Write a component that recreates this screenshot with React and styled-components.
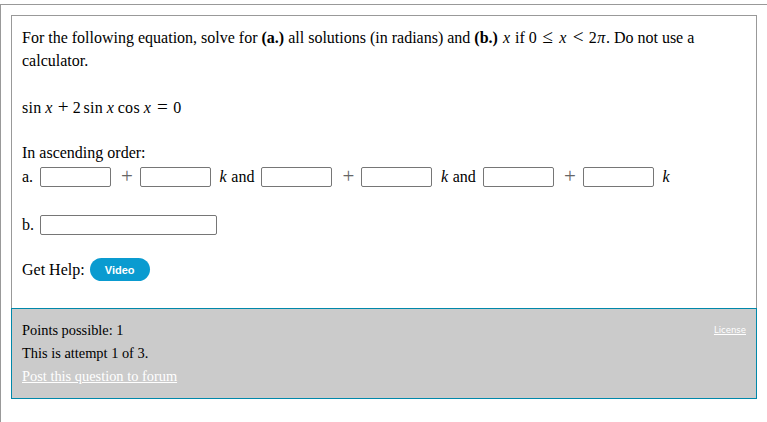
import React from "react";
import styled, { createGlobalStyle } from "styled-components";

const GlobalStyle = createGlobalStyle`
  html, body {
    margin: 0;
    padding: 0;
    background: #fff;
  }
  body {
    font-family: "Liberation Serif", "Times New Roman", serif;
    color: #000;
    overflow: hidden;
  }
`;

// Outer page frame: only top and left borders are visible in the window
const Frame = styled.div`
  margin-top: 4px;
  border-top: 1px solid #999;
  border-left: 1px solid #999;
  padding: 10px 10px 0 10px;
  height: 420px;
  box-sizing: border-box;
`;

const QuestionBox = styled.div`
  background: #fff;
  border: 1px solid #999;
  border-bottom: none;
  padding: 10px 10px 27px 10px;
  font-size: 16px;
  line-height: 23px;
`;

const Prompt = styled.p`
  margin: 0;
`;

const Equation = styled.div`
  margin-top: 24px;
`;

const Label = styled.div`
  margin-top: 22px;
`;

const AnswerRow = styled.div`
  display: flex;
  align-items: center;
  height: 23px;
  margin-top: ${(p) => p.$top || 0}px;
`;

const RowLabel = styled.span`
  width: 18px;
  flex: none;
`;

const Box = styled.input`
  box-sizing: border-box;
  width: ${(p) => p.$width || 71}px;
  height: 20px;
  margin: 0;
  padding: 0 3px;
  border: 1px solid #767676;
  border-radius: 2px;
  background: #fff;
  font: inherit;
  flex: none;
`;

const Plus = styled.span`
  margin: 0 7px 0 10px;
  color: #666;
  font-size: 21px;
  font-weight: 300;
  width: 12px;
  line-height: 1;
  text-align: center;
`;

const KAnd = styled.span`
  margin: 0 7px 0 8px;
  white-space: nowrap;
`;

const KLast = styled.span`
  margin-left: 8px;
`;

// Math glyphs get TeX-like advance widths so the formulas space out like MathJax
const MathVar = styled.i`
  display: inline-block;
  font-style: italic;
  width: ${(p) => p.$w || 0.572}em;
  text-align: center;
`;

const MathOp = styled.span`
  display: inline-block;
  width: 12.4px;
  text-align: center;
  font-size: 1.2em;
  line-height: 1;
  margin: 0 ${(p) => p.$space || 3.5}px;
`;

const Fn = styled.span`
  letter-spacing: 0.02em;
`;

const Thin = styled.span`
  display: inline-block;
  width: ${(p) => p.$w || 0.167}em;
`;

const HelpRow = styled.div`
  display: flex;
  align-items: center;
  margin-top: 22px;
`;

const VideoButton = styled.button`
  margin-left: 5px;
  width: 60px;
  height: 23px;
  border: none;
  border-radius: 12px;
  background: #0a9bd0;
  color: #fff;
  font-family: "Liberation Sans", Arial, sans-serif;
  font-weight: bold;
  font-size: 11px;
  padding: 0;
  cursor: pointer;
`;

const Footer = styled.div`
  background: #cbcbcb;
  border: 1px solid #0088aa;
  padding: 10px;
  font-size: 14.4px;
  line-height: 23px;
`;

const License = styled.a`
  float: right;
  color: #fff;
  font-family: "DejaVu Sans", Verdana, sans-serif;
  font-size: 8.5px;
  text-decoration: underline;
  line-height: 23px;
`;

const ForumLink = styled.a`
  color: #fff;
  text-decoration: underline;
`;

const K = () => <MathVar $w={0.521}>k</MathVar>;

export default function App() {
  return (
    <>
      <GlobalStyle />
      <Frame>
        <QuestionBox>
          <Prompt>
            For the following equation, solve for <b>(a.)</b> all solutions (in radians) and{" "}
            <b>(b.)</b> <MathVar>x</MathVar> if 0<MathOp $space={4.5}>≤</MathOp>
            <MathVar>x</MathVar>
            <MathOp $space={4.5}>&lt;</MathOp>2<MathVar $w={0.57}>π</MathVar>. Do not use a
            calculator.
          </Prompt>
          <Equation>
            <Fn>sin</Fn>
            <Thin />
            <MathVar>x</MathVar>
            <MathOp>+</MathOp>2<Thin />
            <Fn>sin</Fn>
            <Thin />
            <MathVar>x</MathVar>
            <Thin />
            <Fn>cos</Fn>
            <Thin />
            <MathVar>x</MathVar>
            <MathOp $space={4.5}>=</MathOp>0
          </Equation>
          <Label>In ascending order:</Label>
          <AnswerRow $top={1}>
            <RowLabel>a.</RowLabel>
            <Box />
            <Plus>+</Plus>
            <Box />
            <KAnd>
              <K /> and
            </KAnd>
            <Box />
            <Plus>+</Plus>
            <Box />
            <KAnd>
              <K /> and
            </KAnd>
            <Box />
            <Plus>+</Plus>
            <Box />
            <KLast>
              <K />
            </KLast>
          </AnswerRow>
          <AnswerRow $top={25}>
            <RowLabel>b.</RowLabel>
            <Box $width={177} />
          </AnswerRow>
          <HelpRow>
            Get Help:
            <VideoButton>Video</VideoButton>
          </HelpRow>
        </QuestionBox>
        <Footer>
          <License href="#">License</License>
          <div>Points possible: 1</div>
          <div>This is attempt 1 of 3.</div>
          <ForumLink href="#">Post this question to forum</ForumLink>
        </Footer>
      </Frame>
    </>
  );
}
